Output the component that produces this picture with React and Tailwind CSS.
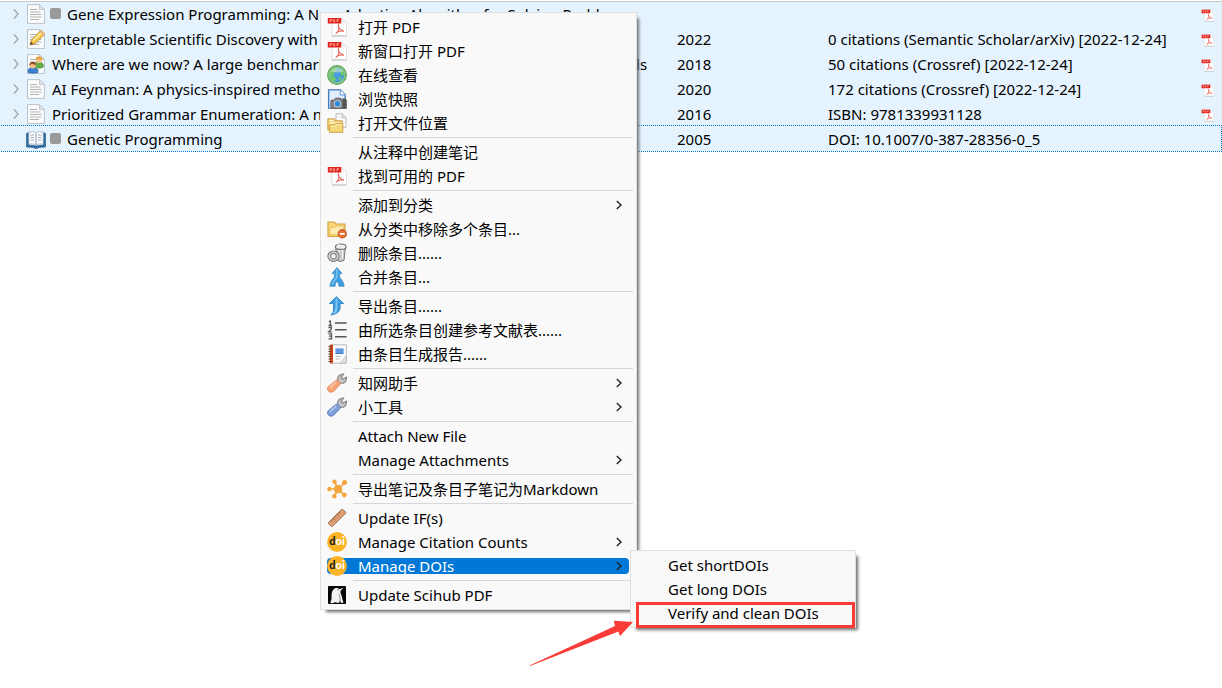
function Svg({ children, className = 'h-5 w-5' }) {
  return (
    <svg viewBox="0 0 20 20" className={`shrink-0 ${className}`} aria-hidden="true">
      {children}
    </svg>
  );
}

function Chevron({ className = '', height = 10, strokeWidth = 1.4 }) {
  return (
    <svg
      viewBox="0 0 8 10"
      width={8}
      height={height}
      preserveAspectRatio="none"
      fill="none"
      stroke="currentColor"
      strokeWidth={strokeWidth}
      className={`shrink-0 ${className}`}
      aria-hidden="true"
    >
      <path d="M1.8 1l4.200 4-4.200 4" />
    </svg>
  );
}

function Page() {
  return (
    <>
      <path d="M1.500.6h12L18.400 5.500v13.900H1.500z" fill="#fcfcfc" stroke="#b9c1cb" />
      <path d="M13.500.6v4.900h4.900z" fill="#dfe5ee" stroke="#b9c1cb" strokeWidth=".8" />
      <path d="M4 5.500h7M4 8h10.500M4 10.500h11.500M4 13h11.500M4 15.500h9" stroke="#b3b3b3" />
    </>
  );
}

function ArticleIcon() {
  return (
    <Svg>
      <Page />
    </Svg>
  );
}

function DraftIcon() {
  return (
    <Svg>
      <Page />
      <path d="M4 16l1.500-5L14 2.200q1.200-1 2.500.2l1.300 1.400q1 1.200-.1 2.400L9 14.500z" fill="#f7c948" stroke="#b98a35" strokeWidth=".9" />
      <path d="M7.500 11.500l8-8" stroke="#fff0a8" strokeWidth="1.600" />
      <path d="M13.500 2.800l4 4 .6-1.500-.5-1.800-1.600-1.500-1.500.1z" fill="#efb18f" />
      <path d="M4 16l1-3.200L7.200 15z" fill="#5c4630" />
    </Svg>
  );
}

function ConferenceIcon() {
  return (
    <Svg>
      <Page />
      <path d="M8.500 13c0-4 1.500-5 4-5s5 1 5 4.500l-2 1.500H10z" fill="#63b04b" stroke="#3f8434" strokeWidth=".7" />
      <circle cx="13" cy="5.800" r="3.200" fill="#f6c48c" />
      <path d="M9.500 6c0-4 6.500-4.500 7-.5-2 .3-4-1-4.500-1.300C11.500 5.500 10.500 6 9.500 6z" fill="#e39422" />
      <path d="M2 18.500c0-4 1.800-5 4.500-5S12 14.500 12 18.500q-5 1.500-10 0z" fill="#3d7fd0" stroke="#285a9f" strokeWidth=".7" />
      <circle cx="6.800" cy="11.200" r="3.200" fill="#f3bd88" />
      <path d="M3.300 11.500c-.2-5 6.500-5 7-.8-2 .2-3.500-.5-4.500-1.200-.6 1-1.500 1.700-2.500 2z" fill="#8c4a1f" />
    </Svg>
  );
}

function BookIcon() {
  return (
    <Svg>
      <path d="M.5 4.500l2-1v12.500l7.500 1 7.500-1V3.500l2 1V18l-7 .5-1 .8h-3l-1-.8-7-.5z" fill="#2f6da8" stroke="#1d4d80" strokeWidth=".6" />
      <path d="M2.800 3.200c3-.9 5.500-.6 7.200 1v11.800c-2-1.200-4.500-1.400-7.200-.8zM17.200 3.200c-3-.9-5.500-.6-7.200 1v11.800c2-1.200 4.500-1.400 7.200-.8z" fill="#fff" stroke="#8ba0b5" strokeWidth=".6" />
      <path d="M4.500 6h3.500M4.500 8.500h3.500M4.500 11h3.500M12 6h3.500M12 8.500h3.500M12 11h3.500" stroke="#9aa7b5" strokeWidth="1.200" />
    </Svg>
  );
}

function PdfIcon({ className }) {
  return (
    <Svg className={className}>
      <path d="M5 1.800h10.500l4 4V18.500H5z" fill="#fff" stroke="#dcdcdc" strokeWidth=".9" />
      <path d="M5 19.200h14.500" stroke="#bdbdbd" strokeWidth=".8" />
      <path d="M15.500 1.800v4h4z" fill="#ececec" />
      <path d="M.8 1h13.500v5.500H.8z" fill="#e2231a" />
      <path d="M3 5V2.600h1.500v1.200H3M6.300 2.600V5h1l.7-1.200-.7-1.200zM10 5V2.600h2M10 3.800h1.500" fill="none" stroke="#ffc4bd" strokeWidth=".7" />
      <path d="M11.500 8c-.6 1.500.9 4.500 5.500 6.300-3-.9-6.200-.1-8.200 2 2.300-1.500 3.700-4.500 2.700-8.300z" fill="none" stroke="#ea625b" strokeWidth="1.100" />
    </Svg>
  );
}

function GlobeIcon() {
  return (
    <Svg>
      <circle cx="10" cy="10" r="9.300" fill="#8fce80" stroke="#5aa256" strokeWidth="1.200" />
      <circle cx="10" cy="10" r="7.400" fill="#4a9bdb" />
      <path d="M3.500 6.500C5 4 8 2.600 11 3l-1.500 2.500L7.500 7l-.3 2.500-2 1.200L8 12.500l1 2-1.500 2.200C4 15.500 1.800 11 3.500 6.500zM12.500 4l3.500 2.200 1.300 4-2.300.3-2-2.300.8-1.700-1.800-.8zM12 12.500l3.500-.5-2.800 4.500z" fill="#72c862" />
      <path d="M3.500 6.500Q10-1 16.500 6.500q-6.500 2-13 0z" fill="#e8f8e4" opacity=".45" />
    </Svg>
  );
}

function SnapshotIcon() {
  return (
    <Svg>
      <path d="M1.500.7h12l4.800 5v13.600H1.500z" fill="#a9cdf5" stroke="#447ac0" strokeWidth="1.100" />
      <path d="M3 2h9.500v5H17v2L3 13z" fill="#e0eefd" />
      <path d="M13.500.7v5h4.800z" fill="#f5faff" stroke="#7099cb" strokeWidth=".7" />
      <path d="M4 11h3.500l1-2h5l1 2h5v8.500H4z" fill="#858585" stroke="#555" strokeWidth=".7" />
      <path d="M15.500 9.500h3.500V19h-3.500z" fill="#555" />
      <circle cx="10.500" cy="14.800" r="3.600" fill="#d0d0d0" />
      <circle cx="10.500" cy="14.800" r="2.700" fill="#268be0" />
    </Svg>
  );
}

function FolderFileIcon() {
  return (
    <Svg>
      <path d="M9 .7h6l4 4v10H9z" fill="#f7f7f7" stroke="#b4b4b4" strokeWidth=".9" />
      <path d="M15 .7v4h4" fill="#ddd" stroke="#b4b4b4" strokeWidth=".8" />
      <path d="M.8 5.800h6.700l1 2h6.700v9H.8z" fill="#efcd70" stroke="#cb9b3f" strokeWidth=".9" />
      <path d="M2.500 7.500h4M2.500 10h12" stroke="#fff6cf" strokeWidth="1.300" />
      <path d="M2.500 12h5l1-1.500h7.300V19.300H2.500z" fill="#f6d878" stroke="#cf9d3b" strokeWidth=".9" />
      <path d="M3.500 13.200h5l1-1.500H15" fill="none" stroke="#fff2ba" />
    </Svg>
  );
}

function FolderRemoveIcon() {
  return (
    <Svg>
      <path d="M1 3h6.500l1.300 2H18v12.500H1z" fill="#f8d774" stroke="#d2a044" strokeWidth="1.100" />
      <path d="M3 8.500h4.500L9 7h7.500v8.500H3z" fill="#fdecb0" stroke="#e8bc5a" strokeWidth=".8" />
      <circle cx="15.300" cy="14.800" r="4.300" fill="#e36c2f" stroke="#bd5424" strokeWidth=".8" />
      <path d="M12.800 14.800h5" stroke="#fff" strokeWidth="1.800" />
    </Svg>
  );
}

function TrashIcon() {
  return (
    <Svg>
      <path d="M8.500 3.500l2 14q3.500 2 6.500-.3l1.500-13.200z" fill="#c9c9c9" stroke="#777" />
      <path d="M12 7v9M15.500 7v9" stroke="#f0f0f0" strokeWidth="1.300" />
      <ellipse cx="13.700" cy="3.700" rx="5.300" ry="2.700" fill="#ededed" stroke="#777" strokeWidth="1.200" />
      <path d="M10 2.500l2-1.200M15 5l3-.8" stroke="#fff" />
      <ellipse cx="6.500" cy="13.200" rx="5.600" ry="5.200" fill="#d8d8d8" stroke="#777" strokeWidth="1.100" />
      <ellipse cx="6.500" cy="13.200" rx="2.800" ry="2.900" fill="#f3f3f3" stroke="#888" strokeWidth="1.200" />
    </Svg>
  );
}

function MergeIcon() {
  return (
    <Svg>
      <path d="M10 .6l5 6h-2.500v2.600c0 2 4 4 4.600 10h-5.200c0-2.500-.6-3.700-1.900-4.700-1.300 1-1.900 2.200-1.900 4.700H2.900c.6-6 4.600-8 4.600-10V6.600H5z" fill="#3c9ee0" stroke="#3b8cc6" strokeWidth=".8" />
      <path d="M10 2.200V9c0 3-4 4.500-5 9" fill="none" stroke="#7cc6f2" strokeWidth="1.500" />
    </Svg>
  );
}

function ExportIcon() {
  return (
    <Svg>
      <path d="M9.500.7l7.200 6.800h-3.600v4.300q0 5.800-9.300 7.300Q7.200 16.500 6.500 12V7.500H2.300z" fill="#3a9ce0" stroke="#3284c2" strokeWidth=".9" />
      <path d="M9.500 2.500v9c0 3-1.500 5-3 6" fill="none" stroke="#7cc6f2" strokeWidth="2" />
    </Svg>
  );
}

function NumberedListIcon() {
  return (
    <Svg>
      <path d="M8 3h11.500M8 9.800h11.500M8 16.800h11.500" stroke="#555" strokeWidth="1.500" />
      <path d="M1.800 1.800l1.500-.8v4.500M1.500 5.500h3.500M1.500 7.500h2.800v1.600L1.700 11.800h3M1.500 13.800h3v5h-3M2 16.200h2.500" fill="none" stroke="#555" strokeWidth="1.300" />
    </Svg>
  );
}

function ReportIcon() {
  return (
    <Svg>
      <path d="M3 .8h16.300v18.400H3z" fill="#fcfcfc" stroke="#b0b0b0" strokeWidth=".9" />
      <path d="M3 .8h3v18.400H3z" fill="#c9481c" />
      <path d="M1.500 2.500h3M1.500 5h3M1.500 7.500h3M1.500 10h3M1.500 12.500h3M1.500 15h3M1.500 17.500h3" stroke="#753321" />
      <path d="M8.500 4.500h8v5.500h-8z" fill="#3e7fd8" />
      <path d="M9 6h7M9 8h7" stroke="#a5c8f5" strokeWidth=".7" />
      <path d="M8.500 12.500h5M8.500 15h4" stroke="#bbb" />
      <path d="M13 19l6-7v7z" fill="#e3e3e3" stroke="#bbb" strokeWidth=".6" />
    </Svg>
  );
}

function WrenchIcon({ handle, edge }) {
  return (
    <Svg>
      <path d="M10.500 8c-.5-4 2-7 6-6.800l-2.300 3.500 1.300 1.500 4-2c.3 4.500-3 7-6.500 5.800z" fill="#c8c8c8" stroke="#8c8c8c" strokeWidth="1.300" />
      <path d="M8.500 7.500q1.800-1 3.600.8t.7 3.700L6.500 18.500q-2.300 1.600-4.900-.1-2-2.400-.7-4.400z" fill={handle} stroke={edge} strokeWidth=".8" />
      <path d="M2.800 14.800l6.500-6" stroke="#fff" strokeWidth="1.600" opacity=".4" />
    </Svg>
  );
}

function NodesIcon() {
  return (
    <Svg>
      <path d="M11 10L7.500 2.800M11 10l6.500-6M11 10H2M11 10l6 6M11 10l-3.500 7" stroke="#f4a640" strokeWidth="1.700" />
      <g fill="#f4a640">
        <circle cx="11" cy="10" r="4.300" />
        <circle cx="7.500" cy="2.800" r="2.200" />
        <circle cx="17.500" cy="3.500" r="2.500" />
        <circle cx="2.400" cy="10" r="2.200" />
        <circle cx="17.300" cy="16" r="2.400" />
        <circle cx="7.300" cy="17.200" r="2.300" />
      </g>
    </Svg>
  );
}

function RulerIcon() {
  return (
    <Svg>
      <path d="M14.500 1.500q.7-.6 1.400 0l2.500 2.500q.6.700 0 1.400L5.500 18.300q-.7.600-1.400 0l-2.500-2.500q-.6-.700 0-1.400z" fill="#e0a072" stroke="#8f6247" strokeWidth=".9" />
      <path d="M4 12.300l1.500 1.500M6 10.300l2 2M8 8.300l1.500 1.500M10 6.300l2 2M12 4.300l1.500 1.500" stroke="#75472f" strokeWidth=".8" />
    </Svg>
  );
}

function DoiIcon() {
  return (
    <Svg>
      <circle cx="10" cy="10" r="9.900" fill="#fcb425" />
      <text
        x="10"
        y="13"
        textAnchor="middle"
        fontSize="11"
        fontWeight="900"
        fontFamily="Lato, sans-serif"
      >
        <tspan fill="#231f20">d</tspan>
        <tspan fill="#fff">oi</tspan>
      </text>
    </Svg>
  );
}

function ScihubIcon() {
  return (
    <Svg>
      <rect x="1" y="1" width="18" height="18" rx="1" fill="#050505" />
      <path d="M3.500 18c-.5-1.500.8-2 1-4 .2-3-.5-7 2-9.500 1.800-1.800 4.500-2 6-.3l4-1.700-3 3.500c-.5 2.500 1.800 4.500 1.800 8l1.200 3.500-2.500.5-1-2.500-1 2.500-4.500-.8-1.500 1z" fill="#f4f4f4" />
      <path d="M12 9c.5 2 1.500 4 1 7" fill="none" stroke="#777" strokeWidth=".8" />
      <circle cx="11" cy="4.800" r=".6" fill="#111" />
    </Svg>
  );
}

const entries = [
  {
    icon: <ArticleIcon />,
    tagged: true,
    title: 'Gene Expression Programming: A New Adaptive Algorithm for Solving Problems',
    pdf: true,
  },
  {
    icon: <DraftIcon />,
    title: 'Interpretable Scientific Discovery with Symbolic Regression: A Review',
    year: '2022',
    extra: '0 citations (Semantic Scholar/arXiv) [2022-12-24]',
    pdf: true,
  },
  {
    icon: <ConferenceIcon />,
    title: 'Where are we now? A large benchmark study of recent symbolic regression methods',
    year: '2018',
    extra: '50 citations (Crossref) [2022-12-24]',
    pdf: true,
  },
  {
    icon: <ArticleIcon />,
    title: 'AI Feynman: A physics-inspired method for symbolic regression',
    year: '2020',
    extra: '172 citations (Crossref) [2022-12-24]',
    pdf: true,
  },
  {
    icon: <ArticleIcon />,
    title: 'Prioritized Grammar Enumeration: A novel method for symbolic regression',
    year: '2016',
    extra: 'ISBN: 9781339931128',
    pdf: true,
  },
  {
    icon: <BookIcon />,
    tagged: true,
    focused: true,
    title: 'Genetic Programming',
    year: '2005',
    extra: 'DOI: 10.1007/0-387-28356-0_5',
  },
];

const menuGroups = [
  [
    { label: '打开 PDF', icon: <PdfIcon /> },
    { label: '新窗口打开 PDF', icon: <PdfIcon /> },
    { label: '在线查看', icon: <GlobeIcon /> },
    { label: '浏览快照', icon: <SnapshotIcon /> },
    { label: '打开文件位置', icon: <FolderFileIcon /> },
  ],
  [{ label: '从注释中创建笔记' }, { label: '找到可用的 PDF', icon: <PdfIcon /> }],
  [
    { label: '添加到分类', arrow: true },
    { label: '从分类中移除多个条目...', icon: <FolderRemoveIcon /> },
    { label: '删除条目......', icon: <TrashIcon /> },
    { label: '合并条目...', icon: <MergeIcon /> },
  ],
  [
    { label: '导出条目......', icon: <ExportIcon /> },
    { label: '由所选条目创建参考文献表......', icon: <NumberedListIcon /> },
    { label: '由条目生成报告......', icon: <ReportIcon /> },
  ],
  [
    { label: '知网助手', icon: <WrenchIcon handle="#f6a275" edge="#e08a5c" />, arrow: true },
    { label: '小工具', icon: <WrenchIcon handle="#7f9fdc" edge="#5c7dbb" />, arrow: true },
  ],
  [{ label: 'Attach New File' }, { label: 'Manage Attachments', arrow: true }],
  [{ label: '导出笔记及条目子笔记为Markdown', icon: <NodesIcon /> }],
  [
    { label: 'Update IF(s)', icon: <RulerIcon /> },
    { label: 'Manage Citation Counts', icon: <DoiIcon />, arrow: true },
    {
      label: 'Manage DOIs',
      icon: <DoiIcon />,
      arrow: true,
      submenu: ['Get shortDOIs', 'Get long DOIs', 'Verify and clean DOIs'],
    },
  ],
  [{ label: 'Update Scihub PDF', icon: <ScihubIcon /> }],
];

const panel = 'border border-[#e0e0e0] bg-[#f9f9f9] py-0.5 shadow-[4px_4px_3px_-2px_#707070]';

function MenuItem({ label, icon, arrow, active }) {
  return (
    <button
      type="button"
      role="menuitem"
      aria-haspopup={arrow ? 'menu' : undefined}
      className="flex h-6 w-full items-center pr-[7px] pl-[6px] text-left"
    >
      <span
        className={`flex h-4 w-full items-center rounded ${active ? 'bg-[#0078d7] text-white' : ''}`}
      >
        <span className="mr-[11px] w-5 shrink-0">{icon}</span>
        <span
          className={`grow whitespace-nowrap ${active ? 'h-4 overflow-hidden leading-4' : 'leading-6'}`}
        >
          {label}
        </span>
        {arrow && <Chevron className="mr-1.5 text-[#222]" />}
      </span>
    </button>
  );
}

function Submenu({ items }) {
  return (
    <div role="menu" className={`absolute -top-1 left-[309px] z-10 w-[226px] ${panel}`}>
      {items.map((label) => (
        <MenuItem key={label} label={label} />
      ))}
      {/* highlight box and arrow over the last entry */}
      <div className="pointer-events-none absolute right-0 -bottom-px left-[5px] h-[26px] border-3 border-[#fb3b37]" />
      <svg
        viewBox="0 0 105 46"
        className="pointer-events-none absolute top-[69px] -left-[102px] h-[46px] w-[105px]"
        aria-hidden="true"
      >
        <path d="M.5 45.500L86 6 84.800.8 104 2 91 16l-1.600-4.500L1 46z" fill="#fb3b37" />
      </svg>
    </div>
  );
}

function ContextMenu() {
  return (
    <div role="menu" className={`absolute top-3 left-80 w-[317px] ${panel}`}>
      {menuGroups.map((group, i) => (
        <div key={i}>
          {i > 0 && <hr className="my-0.5 mr-[3px] ml-8 border-[#d7d7d7]" />}
          {group.map((item) => (
            <div key={item.label} className="relative">
              <MenuItem {...item} active={Boolean(item.submenu)} />
              {item.submenu && <Submenu items={item.submenu} />}
            </div>
          ))}
        </div>
      ))}
    </div>
  );
}

function EntryRow({ entry }) {
  return (
    <tr
      className={`h-[25px] ${
        entry.focused ? 'outline outline-dotted outline-[#0078d7]' : ''
      }`}
    >
      <td className="p-0">
        <div className="flex h-[25px] items-center pl-3 whitespace-nowrap">
          <span className="mr-1.5 w-2 text-[#a0a0a0]">
            {!entry.focused && <Chevron height={12} strokeWidth={1.2} />}
          </span>
          {entry.icon}
          {entry.tagged && <span className="ml-1 h-[11px] w-[11px] rounded-xs bg-[#999]" />}
          <span className="ml-1.5">{entry.title}</span>
        </div>
      </td>
      <td className="p-0">{entry.year}</td>
      <td className="p-0 whitespace-nowrap">{entry.extra}</td>
      <td className="p-0 pt-1">{entry.pdf && <PdfIcon className="h-[13px] w-[13px]" />}</td>
    </tr>
  );
}

export default function App() {
  return (
    <div className="relative min-h-screen overflow-hidden bg-white pt-px font-['Noto_Sans','Noto_Sans_CJK_SC',sans-serif] text-[15px] leading-5 text-black">
      <div className="bg-[#e5f3ff] pr-px shadow-[0_1px_0_#c8c8c8_inset]">
        <table className="w-full table-fixed border-separate border-spacing-0">
          <colgroup>
            <col className="w-[677px]" />
            <col className="w-[151px]" />
            <col />
            <col className="w-5" />
          </colgroup>
          <tbody>
            {entries.map((entry) => (
              <EntryRow key={entry.title} entry={entry} />
            ))}
          </tbody>
        </table>
      </div>
      <ContextMenu />
    </div>
  );
}
